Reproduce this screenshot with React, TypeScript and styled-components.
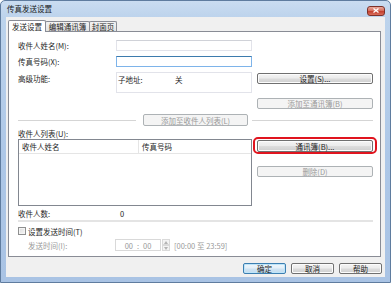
import React from 'react';
import styled, { createGlobalStyle, css } from 'styled-components';

const GlobalStyle = createGlobalStyle`
  html, body {
    margin: 0;
    padding: 0;
    width: 391px;
    height: 283px;
    overflow: hidden;
    background: #fff;
  }
  body {
    font-family: "Noto Sans CJK SC", "Noto Sans", sans-serif;
    font-size: 7.5px;
    color: #1e1e1e;
  }
`;

const Window = styled.div`
  box-sizing: border-box;
  width: 391px;
  height: 283px;
  display: flex;
  flex-direction: column;
  background: linear-gradient(180deg, #cadcf1 0%, #bcd3ec 6%, #adc7e7 55%, #a9c3e4 100%);
  border: 1px solid #5f7c9f;
  border-radius: 5px 5px 0 0;
`;

const TitleBar = styled.div`
  height: 16px;
  display: flex;
  align-items: center;
  justify-content: space-between;
  padding: 0 5px 0 6px;
`;

const Title = styled.span`
  font-size: 7.5px;
  color: #1a1a1a;
  line-height: 16px;
`;

const CloseButton = styled.div`
  box-sizing: border-box;
  width: 18px;
  height: 10px;
  margin-top: 3px;
  border: 1px solid #7d3129;
  border-radius: 3px;
  background: linear-gradient(180deg, #e9a99c 0%, #d6705f 45%, #c4402f 55%, #d96e5c 100%);
  display: flex;
  align-items: center;
  justify-content: center;
`;

const Client = styled.div`
  flex: 1;
  margin: 0 5px 5px 5px;
  background: #f0f0f0;
  display: flex;
  flex-direction: column;
  padding: 3px 0 0 2px;
`;

const TabRow = styled.div`
  display: flex;
  align-items: flex-end;
  height: 11px;
`;

const Tab = styled.div<{ $active?: boolean; $w: number }>`
  box-sizing: border-box;
  width: ${(p) => p.$w}px;
  display: flex;
  align-items: center;
  justify-content: center;
  border: 1px solid #898c95;
  border-bottom: none;
  border-radius: 2px 2px 0 0;
  color: #1e1e1e;
  ${(p) =>
    p.$active
      ? css`
          height: 12px;
          margin-bottom: -1px;
          background: #fff;
          position: relative;
          z-index: 1;
        `
      : css`
          height: 10px;
          margin-left: -1px;
          background: linear-gradient(180deg, #f3f3f3, #e3e3e3);
        `}
`;

const Panel = styled.div`
  box-sizing: border-box;
  width: 373px;
  height: 226px;
  background: #fff;
  border: 1px solid #898c95;
  padding: 8px 7px 0 9px;
  display: flex;
  flex-direction: column;
`;

const TopGrid = styled.div`
  display: grid;
  grid-template-columns: 98px 136px 5px 116px;
  grid-template-rows: 11px 11px 21px 11px;
  row-gap: 5px;
`;

const Label = styled.div<{ $top?: boolean; $disabled?: boolean }>`
  grid-column: 1;
  align-self: ${(p) => (p.$top ? 'start' : 'center')};
  padding-top: ${(p) => (p.$top ? '2px' : '0')};
  color: ${(p) => (p.$disabled ? '#9a9a9a' : '#1e1e1e')};
  line-height: 9px;
  white-space: nowrap;
`;

const TextBox = styled.div<{ $focus?: boolean }>`
  grid-column: 2;
  box-sizing: border-box;
  background: #fff;
  border: 1px solid ${(p) => (p.$focus ? '#7eb4ea' : '#e2e3ea')};
  border-top-color: ${(p) => (p.$focus ? '#3d7bad' : '#d0d2d8')};
`;

const InfoBox = styled.div`
  grid-column: 2;
  box-sizing: border-box;
  border: 1px solid #e2e3ea;
  display: flex;
  padding: 2px 0 0 1px;
  line-height: 9px;
`;

const InfoKey = styled.span`
  width: 57px;
`;

const Button = styled.div<{ $disabled?: boolean; $default?: boolean; $w?: number }>`
  box-sizing: border-box;
  height: 11px;
  ${(p) => (p.$w ? `width: ${p.$w}px;` : '')}
  display: flex;
  align-items: center;
  justify-content: center;
  border-radius: 2px;
  white-space: nowrap;
  line-height: 9px;
  ${(p) =>
    p.$disabled
      ? css`
          border: 1px solid #adb2b5;
          background: #f4f4f4;
          color: #9a9a9a;
        `
      : p.$default
      ? css`
          border: 1px solid #3c7fb1;
          background: linear-gradient(180deg, #eef6fb 0%, #e3eff8 48%, #cfe4f3 52%, #c3dcef 100%);
          box-shadow: inset 0 0 0 1px #bfe5f9;
          color: #1e1e1e;
        `
      : css`
          border: 1px solid #707070;
          background: linear-gradient(180deg, #f4f4f4 0%, #ebebeb 48%, #dddddd 52%, #cfcfcf 100%);
          box-shadow: inset 0 0 0 1px #fcfcfc;
          color: #1e1e1e;
        `}
`;

const SideButton = styled(Button)<{ $row: number; $mt?: number }>`
  grid-column: 4;
  grid-row: ${(p) => p.$row};
  align-self: start;
  margin-top: ${(p) => p.$mt ?? 0}px;
`;

const SeparatorRow = styled.div`
  display: flex;
  align-items: center;
  height: 12px;
  margin-top: 5px;
`;

const Rule = styled.div<{ $w?: number }>`
  height: 1px;
  background: #d5d5d5;
  ${(p) => (p.$w ? `width: ${p.$w}px;` : 'flex: 1;')}
`;

const PlainLabel = styled.div<{ $mt: number; $disabled?: boolean }>`
  margin-top: ${(p) => p.$mt}px;
  line-height: 9px;
  height: 9px;
  color: ${(p) => (p.$disabled ? '#9a9a9a' : '#1e1e1e')};
`;

const ListSection = styled.div`
  display: flex;
  margin-top: 1px;
`;

const ListView = styled.div`
  box-sizing: border-box;
  width: 234px;
  height: 67px;
  border: 1px solid #828790;
  background: #fff;
`;

const ListHeader = styled.div`
  display: flex;
  height: 13px;
  border-bottom: 1px solid #e5e5e5;
  line-height: 13px;
`;

const HeaderCell = styled.div<{ $w?: number }>`
  ${(p) => (p.$w ? `width: ${p.$w}px; border-right: 1px solid #e5e5e5;` : 'flex: 1;')}
  padding-left: 3px;
`;

const SideColumn = styled.div`
  width: 116px;
  margin-left: 5px;
  display: flex;
  flex-direction: column;
`;

const Highlight = styled.div`
  position: relative;
  margin-top: 1px;
  &::after {
    content: '';
    position: absolute;
    inset: -3px -4px -2px -4px;
    border: 2px solid #e0141e;
    border-radius: 5px;
  }
`;

const CountRow = styled.div`
  display: flex;
  margin-top: 3px;
  height: 9px;
  line-height: 9px;
`;

const CountLabel = styled.div`
  width: 102px;
`;

const Divider = styled.div`
  height: 2px;
  margin-top: 2px;
  width: 355px;
  background: #e4e4e4;
`;

const CheckRow = styled.div`
  display: flex;
  align-items: center;
  margin-top: 5px;
  height: 8px;
  line-height: 9px;
`;

const CheckBox = styled.div`
  box-sizing: border-box;
  width: 8px;
  height: 8px;
  border: 1px solid #8e8f8f;
  background: linear-gradient(135deg, #dcdcdc, #f6f6f6);
  box-shadow: inset 0 0 0 1px #f4f4f4;
  margin-right: 2px;
`;

const TimeRow = styled.div`
  display: flex;
  align-items: center;
  margin-top: 4px;
  height: 12px;
  color: #9a9a9a;
`;

const TimeLabel = styled.div`
  width: 87px;
  padding-left: 10px;
  line-height: 9px;
`;

const TimeBox = styled.div`
  box-sizing: border-box;
  width: 46px;
  height: 12px;
  border: 1px solid #d9d9d9;
  display: flex;
  align-items: center;
  justify-content: center;
  gap: 4px;
  background: #fff;
`;

const Spin = styled.div`
  width: 8px;
  height: 12px;
  margin-left: 1px;
  display: flex;
  flex-direction: column;
  gap: 0;
`;

const SpinPart = styled.div`
  box-sizing: border-box;
  flex: 1;
  border: 1px solid #dadada;
  background: #f4f4f4;
  display: flex;
  align-items: center;
  justify-content: center;
`;

const Range = styled.div`
  margin-left: 4px;
  line-height: 9px;
`;

const Footer = styled.div`
  display: flex;
  justify-content: flex-end;
  gap: 5px;
  margin-top: 6px;
  padding-right: 3px;
`;

const Arrow: React.FC<{ up?: boolean }> = ({ up }) => (
  <svg width="4" height="3" viewBox="0 0 4 3">
    <path d={up ? 'M0 3 L2 0 L4 3 Z' : 'M0 0 L4 0 L2 3 Z'} fill="#b4b4b4" />
  </svg>
);

const App: React.FC = () => (
  <>
    <GlobalStyle />
    <Window>
      <TitleBar>
        <Title>传真发送设置</Title>
        <CloseButton>
          <svg width="6" height="5" viewBox="0 0 6 5">
            <path d="M0.5 0.5 L5.5 4.5 M5.5 0.5 L0.5 4.5" stroke="#fff" strokeWidth="1.3" />
          </svg>
        </CloseButton>
      </TitleBar>
      <Client>
        <TabRow>
          <Tab $active $w={38}>发送设置</Tab>
          <Tab $w={45}>编辑通讯簿</Tab>
          <Tab $w={28}>封面页</Tab>
        </TabRow>
        <Panel>
          <TopGrid>
            <Label style={{ gridRow: 1 }}>收件人姓名(M):</Label>
            <TextBox style={{ gridRow: 1 }} />
            <Label style={{ gridRow: 2 }}>传真号码(X):</Label>
            <TextBox $focus style={{ gridRow: 2 }} />
            <Label $top style={{ gridRow: 3 }}>高级功能:</Label>
            <InfoBox style={{ gridRow: 3 }}>
              <InfoKey>子地址:</InfoKey>
              <span>关</span>
            </InfoBox>
            <SideButton $row={3} $mt={1}>设置(S)...</SideButton>
            <SideButton $row={4} $disabled>添加至通讯簿(B)</SideButton>
          </TopGrid>
          <SeparatorRow>
            <Rule $w={118} />
            <Button $disabled $w={105} style={{ height: 12, margin: '0 4px 0 7px' }}>
              添加至收件人列表(L)
            </Button>
            <Rule />
          </SeparatorRow>
          <PlainLabel $mt={3}>收件人列表(U):</PlainLabel>
          <ListSection>
            <ListView>
              <ListHeader>
                <HeaderCell $w={116}>收件人姓名</HeaderCell>
                <HeaderCell>传真号码</HeaderCell>
              </ListHeader>
            </ListView>
            <SideColumn>
              <Highlight>
                <Button style={{ height: 12 }}>通讯簿(B)...</Button>
              </Highlight>
              <Button $disabled style={{ marginTop: 14 }}>删除(D)</Button>
            </SideColumn>
          </ListSection>
          <CountRow>
            <CountLabel>收件人数:</CountLabel>
            <span>0</span>
          </CountRow>
          <Divider />
          <CheckRow>
            <CheckBox />
            设置发送时间(T)
          </CheckRow>
          <TimeRow>
            <TimeLabel>发送时间(I):</TimeLabel>
            <TimeBox>
              <span>00</span>
              <span>:</span>
              <span>00</span>
            </TimeBox>
            <Spin>
              <SpinPart>
                <Arrow up />
              </SpinPart>
              <SpinPart>
                <Arrow />
              </SpinPart>
            </Spin>
            <Range>[00:00 至 23:59]</Range>
          </TimeRow>
        </Panel>
        <Footer>
          <Button $default $w={43}>确定</Button>
          <Button $w={43}>取消</Button>
          <Button $w={43}>帮助</Button>
        </Footer>
      </Client>
    </Window>
  </>
);

export default App;
